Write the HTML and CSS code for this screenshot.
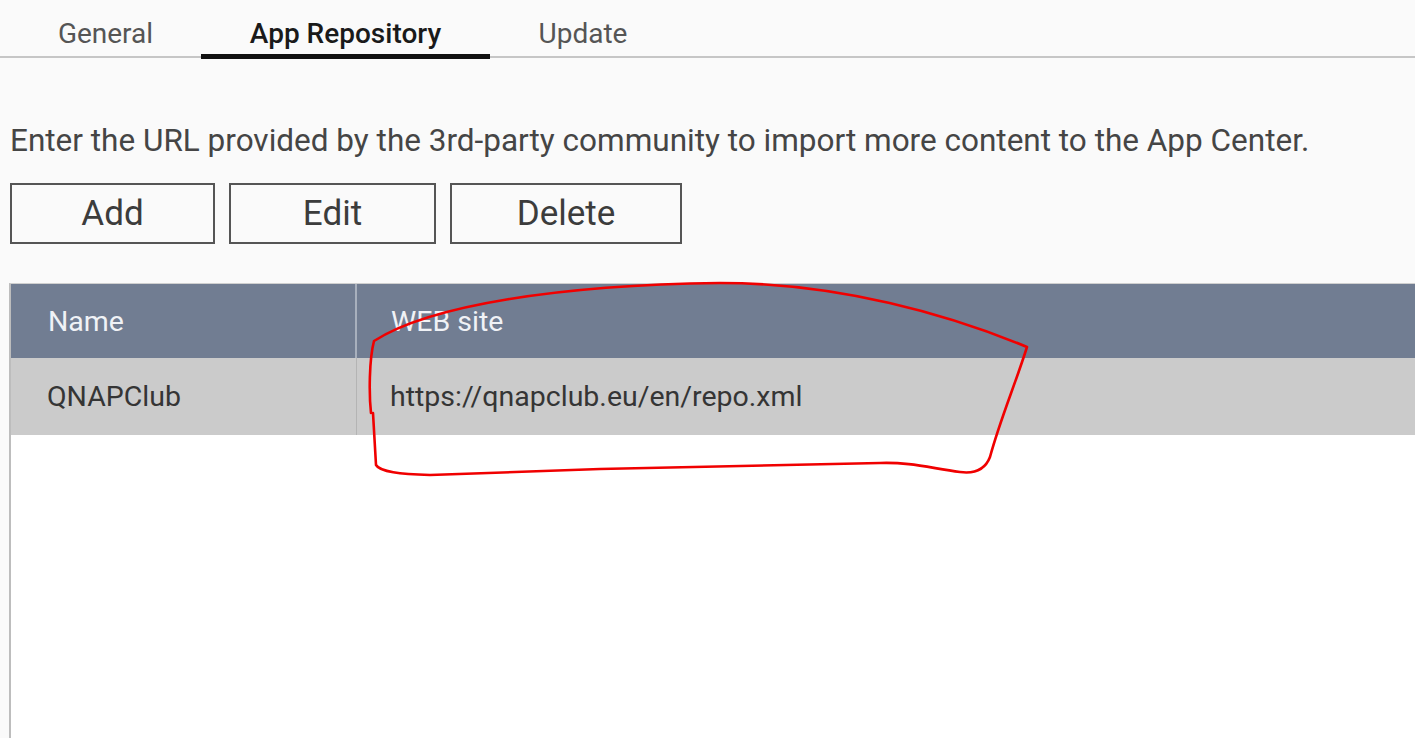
FILE: index.html
```html
<!DOCTYPE html>
<html lang="en">
<head>
<meta charset="utf-8">
<title>App Repository</title>
<link rel="stylesheet" href="styles.css">
</head>
<body>
<div class="page">
  <nav class="tabs">
    <div class="tab tab-general">General</div>
    <div class="tab tab-repo active">App Repository</div>
    <div class="tab tab-update">Update</div>
  </nav>
  <p class="desc">Enter the URL provided by the 3rd-party community to import more content to the App Center.</p>
  <div class="actions">
    <button class="btn btn-add">Add</button>
    <button class="btn btn-edit">Edit</button>
    <button class="btn btn-delete">Delete</button>
  </div>
  <div class="grid">
    <div class="grid-head">
      <div class="cell col-name">Name</div>
      <div class="cell col-web">WEB site</div>
    </div>
    <div class="grid-row">
      <div class="cell col-name">QNAPClub</div>
      <div class="cell col-web">https://qnapclub.eu/en/repo.xml</div>
    </div>
    <div class="grid-body"></div>
  </div>
  <svg class="scribble" width="1415" height="738" viewBox="0 0 1415 738">
    <path d="M 371 413 C 369 395, 369 360, 374 341 C 430 305, 560 285, 720 283 C 840 283, 950 315, 1027 347 C 1015 385, 1000 420, 990 457 C 985 470, 975 474, 960 472 C 930 468, 910 462, 880 463 L 600 469 L 430 475 C 400 474, 380 472, 376 465 L 373 413" fill="none" stroke="#f00000" stroke-width="2.6" stroke-linejoin="round" stroke-linecap="round"/>
  </svg>
</div>
</body>
</html>
```

FILE: styles.css
```css
html, body {
  margin: 0;
  padding: 0;
  background: #fafafa;
  font-family: Roboto, "Liberation Sans", sans-serif;
  color: #444;
}
.page {
  position: relative;
  width: 1415px;
  height: 738px;
  overflow: hidden;
  display: flex;
  flex-direction: column;
}
.tabs {
  display: flex;
  padding-left: 10px;
  height: 56px;
  border-bottom: 2px solid #c6c6c6;
  flex: none;
}
.tab {
  box-sizing: border-box;
  font-size: 28px;
  color: #555;
  text-align: center;
  padding-top: 18px;
  line-height: 32px;
}
.tab-general { width: 191px; }
.tab-repo { width: 289px; }
.tab-update { width: 186px; }
.tab.active {
  color: #1a1a1a;
  font-weight: 500;
  border-bottom: 5px solid #111;
  height: 59px;
}
.desc {
  margin: 0;
  padding: 63px 0 0 10px;
  font-size: 31.5px;
  line-height: 40px;
  color: #454545;
  flex: none;
}
.actions {
  display: flex;
  gap: 14px;
  padding: 22px 0 0 10px;
  flex: none;
}
.btn {
  box-sizing: border-box;
  height: 61px;
  border: 2px solid #555;
  background: #fafafa;
  font-family: Roboto, "Liberation Sans", sans-serif;
  font-size: 35px;
  color: #3c3c3c;
  padding: 0;
}
.btn-add { width: 205px; }
.btn-edit { width: 207px; }
.btn-delete { width: 232px; }
.grid {
  margin: 39px 0 0 9px;
  border-left: 2px solid #bdbdbd;
  border-top: 1px solid #cfcfcf;
  flex: 1;
  display: flex;
  flex-direction: column;
  background: #fff;
}
.grid-head, .grid-row {
  display: flex;
  flex: none;
}
.grid-head {
  height: 74px;
  background: #717d92;
  color: #f0f2f6;
}
.grid-row {
  height: 77px;
  background: #cbcbcb;
  color: #353535;
}
.cell {
  display: flex;
  align-items: center;
  font-size: 28.5px;
  box-sizing: border-box;
}
.col-name {
  width: 346px;
  padding-left: 37px;
}
.grid-head .col-name {
  border-right: 2px solid #a8b0bd;
}
.grid-row .col-name {
  border-right: 1px solid #b4b4b4;
  padding-left: 36px;
}
.col-web {
  flex: 1;
  padding-left: 34px;
}
.grid-row .col-web { padding-left: 33px; }
.grid-body {
  flex: 1;
  background: #fff;
}
.scribble {
  position: absolute;
  left: 0;
  top: 0;
  pointer-events: none;
}
```
